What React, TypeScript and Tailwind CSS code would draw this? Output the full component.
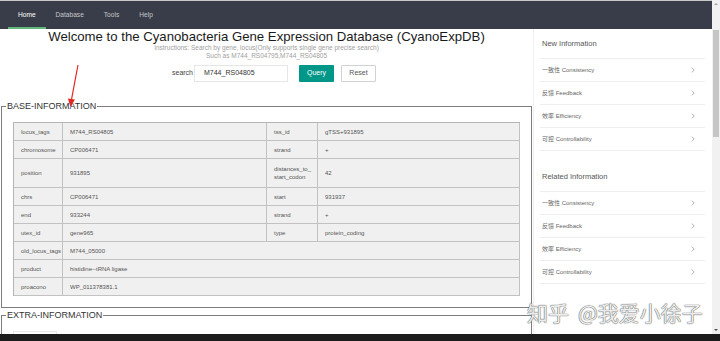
import React from "react";

const Chevron = () => (
  <svg width="4" height="6" viewBox="0 0 4 6" className="shrink-0">
    <polyline points="0.8,0.6 3.2,3 0.8,5.4" fill="none" stroke="#9a9a9a" strokeWidth="0.8" />
  </svg>
);

const SideItem = ({ cn, en }: { cn: string; en: string }) => (
  <div className="h-[23px] border-b border-[#eeeeee] flex items-center justify-between pl-[2px] pr-[10px]">
    <span className="text-[6px] text-[#666] font-['Liberation_Sans','Noto_Sans_CJK_SC',sans-serif]">
      {cn} {en}
    </span>
    <Chevron />
  </div>
);

const Card = ({ title, className = "" }: { title: string; className?: string }) => (
  <div className={className}>
    <div className="h-[30px] border-b border-[#eeeeee] flex items-center pl-[2px] text-[7.5px] text-[#555]">
      {title}
    </div>
    <SideItem cn="一致性" en="Consistency" />
    <SideItem cn="反馈" en="Feedback" />
    <SideItem cn="效率" en="Efficiency" />
    <SideItem cn="可控" en="Controllability" />
  </div>
);

type Cell = { text: React.ReactNode; span?: boolean };

const Row = ({ cells, h }: { cells: Cell[]; h: string }) => (
  <>
    {cells.map((c, i) => (
      <div
        key={i}
        className={`${h} ${c.span ? "col-span-3" : ""} border-r border-b border-[#c2c2c2] bg-[#f0f0f0] flex items-center pl-[7px] text-[6px] leading-[8px] text-[#555] whitespace-nowrap overflow-visible`}
      >
        {c.text}
      </div>
    ))}
  </>
);

export default function App() {
  const rows: { cells: Cell[]; tall?: boolean }[] = [
    { cells: [{ text: "locus_tags" }, { text: "M744_RS04805" }, { text: "tss_id" }, { text: "gTSS+931895" }] },
    { cells: [{ text: "chromosome" }, { text: "CP006471" }, { text: "strand" }, { text: "+" }] },
    {
      tall: true,
      cells: [
        { text: "position" },
        { text: "931895" },
        {
          text: (
            <span>
              distances_to_
              <br />
              start_codon
            </span>
          ),
        },
        { text: "42" },
      ],
    },
    { cells: [{ text: "chrs" }, { text: "CP006471" }, { text: "start" }, { text: "931937" }] },
    { cells: [{ text: "end" }, { text: "933244" }, { text: "strand" }, { text: "+" }] },
    { cells: [{ text: "utex_id" }, { text: "gene965" }, { text: "type" }, { text: "protein_coding" }] },
    { cells: [{ text: "old_locus_tags" }, { text: "M744_05000", span: true }] },
    { cells: [{ text: "product" }, { text: "histidine--tRNA ligase", span: true }] },
    { cells: [{ text: "proacono" }, { text: "WP_011378381.1", span: true }] },
  ];

  return (
    <div className="w-[720px] h-[341px] overflow-hidden relative bg-white flex flex-col font-['Liberation_Sans',Arial,sans-serif]">
      <div className="flex h-[334px]">
        <div className="w-[712px] flex flex-col">
          {/* nav */}
          <div className="h-[29px] shrink-0 bg-[#393d49] border-t border-[#c8c8c8] flex items-stretch pl-[8px]">
            <div className="relative px-[10px] flex items-center text-[6.6px] text-white">
              Home
              <div className="absolute left-0 right-0 bottom-0 h-[2px] bg-[#5fb878]" />
            </div>
            <div className="px-[10px] flex items-center text-[6.6px] text-[#c4c6ca]">Database</div>
            <div className="px-[10px] flex items-center text-[6.6px] text-[#c4c6ca]">Tools</div>
            <div className="px-[10px] flex items-center text-[6.6px] text-[#c4c6ca]">Help</div>
          </div>

          <div className="flex flex-1 min-h-0">
            {/* main */}
            <div className="w-[533px] shrink-0 flex flex-col overflow-hidden">
              <div className="text-center text-[13.2px] leading-[15px] text-[#1a1a1a]">
                Welcome to the Cyanobacteria Gene Expression Database (CyanoExpDB)
              </div>
              <div className="text-center text-[6.5px] leading-[8px] text-[#a0a0a0]">
                Instructions: Search by gene, locus(Only supports single gene precise search)
              </div>
              <div className="text-center text-[6.5px] leading-[8px] text-[#a0a0a0]">
                Such as M744_RS04795,M744_RS04805
              </div>
              <div className="flex items-center mt-[5px] h-[17px] pl-[172px]">
                <span className="text-[7px] text-[#444] w-[21px]">search</span>
                <div className="ml-[1px] w-[94px] h-[17px] border border-[#e6e6e6] bg-white flex items-center pl-[9px] text-[7px] text-[#333]">
                  M744_RS04805
                </div>
                <div className="ml-[11px] w-[35px] h-[17px] bg-[#009688] rounded-[1px] flex items-center justify-center text-[7px] text-white">
                  Query
                </div>
                <div className="ml-[7px] w-[35px] h-[17px] border border-[#d2d2d2] bg-white rounded-[1px] flex items-center justify-center text-[7px] text-[#555]">
                  Reset
                </div>
              </div>
              <div className="mt-[11px] h-px bg-[#f2f2f2]" />

              <fieldset className="ml-[1px] w-[531px] mt-[8px] border border-[#7d7d7d] min-w-0">
                <legend className="ml-[4px] px-[1px] text-[9px] leading-[10px] text-[#333]">BASE-INFORMATION</legend>
                <div className="pl-[11px] pt-[11px] pb-[11px]">
                  <div className="w-[507px] grid grid-cols-[49px_204px_51px_202px] border-l border-t border-[#b5b5b5]">
                    {rows.map((r, i) => (
                      <Row key={i} cells={r.cells} h={r.tall ? "h-[29px]" : "h-[18px]"} />
                    ))}
                  </div>
                </div>
              </fieldset>

              <fieldset className="ml-[1px] w-[531px] mt-[2px] border border-[#7d7d7d] min-w-0 shrink-0">
                <legend className="ml-[4px] px-[1px] text-[9px] leading-[10px] text-[#333]">EXTRA-INFORMATION</legend>
                <div className="pl-[11px] pt-[11px]">
                  <div className="w-[44px] h-[10px] border border-[#e8e8e8]" />
                </div>
              </fieldset>
            </div>

            {/* sidebar */}
            <div className="w-[179px] shrink-0 border-l border-[#f0f0f0] pl-[6px]">
              <div className="w-[165px]">
                <Card title="New Information" />
                <Card title="Related Information" className="mt-[11px]" />
              </div>
            </div>
          </div>
        </div>

        {/* scrollbar */}
        <div className="w-[8px] h-[334px] bg-[#f1f1f1] flex flex-col items-center relative">
          <svg width="8" height="8" viewBox="0 0 8 8" className="shrink-0">
            <polygon points="2,5 6,5 4,3" fill="#a3a3a3" />
          </svg>
          <div className="mt-[22px] w-[6px] h-[107px] bg-[#c6c6c6]" />
          <svg width="8" height="8" viewBox="0 0 8 8" className="absolute bottom-0 left-0">
            <polygon points="2,3 6,3 4,5" fill="#505050" />
          </svg>
        </div>
      </div>
      <div className="h-[7px] bg-[#1c1c1c]" />

      {/* annotation arrow */}
      <svg className="absolute left-0 top-0 pointer-events-none" width="720" height="341" viewBox="0 0 720 341">
        <line x1="78" y1="65" x2="71.5" y2="99.5" stroke="#e3261f" strokeWidth="1.2" />
        <polygon points="70.5,107 74.9,99.6 67.9,98.4" fill="#e3261f" />
      </svg>

      {/* watermark */}
      <div className="absolute left-[527px] top-[299px] text-[21px] leading-[26px] text-[#ececec] font-['Noto_Sans_CJK_SC',sans-serif] [text-shadow:0_0_1px_#555,0_0_1px_#555] whitespace-nowrap pointer-events-none">
        知乎<span className="ml-[9px]">@我爱小徐子</span>
      </div>
    </div>
  );
}
